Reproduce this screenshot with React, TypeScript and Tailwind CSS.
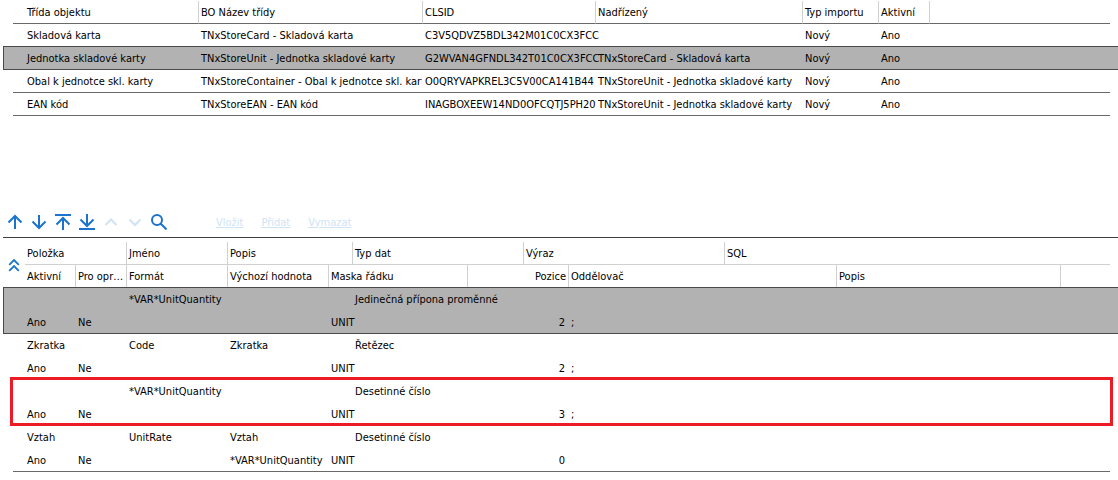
import React from "react";
import clsx from "clsx";

interface ImportClass {
  name: string;
  boClass: string;
  clsid: string;
  parent: string;
  importType: string;
  active: string;
  selected?: boolean;
}

interface ImportItem {
  item: string;
  name: string;
  label: string;
  dataType: string;
  active: string;
  forFix: string;
  defaultValue: string;
  mask: string;
  position: number;
  separator: string;
  selected?: boolean;
  marked?: boolean;
}

const classes: ImportClass[] = [
  { name: "Skladová karta", boClass: "TNxStoreCard - Skladová karta", clsid: "C3V5QDVZ5BDL342M01C0CX3FCC", parent: "", importType: "Nový", active: "Ano" },
  { name: "Jednotka skladové karty", boClass: "TNxStoreUnit - Jednotka skladové karty", clsid: "G2WVAN4GFNDL342T01C0CX3FCC", parent: "TNxStoreCard - Skladová karta", importType: "Nový", active: "Ano", selected: true },
  { name: "Obal k jednotce skl. karty", boClass: "TNxStoreContainer - Obal k jednotce skl. karty", clsid: "O0QRYVAPKREL3C5V00CA141B44", parent: "TNxStoreUnit - Jednotka skladové karty", importType: "Nový", active: "Ano" },
  { name: "EAN kód", boClass: "TNxStoreEAN - EAN kód", clsid: "INAGBOXEEW14ND0OFCQTJ5PH20", parent: "TNxStoreUnit - Jednotka skladové karty", importType: "Nový", active: "Ano" },
];

const items: ImportItem[] = [
  { item: "", name: "*VAR*UnitQuantity", label: "", dataType: "Jedinečná přípona proměnné", active: "Ano", forFix: "Ne", defaultValue: "", mask: "UNIT", position: 2, separator: ";", selected: true },
  { item: "Zkratka", name: "Code", label: "Zkratka", dataType: "Řetězec", active: "Ano", forFix: "Ne", defaultValue: "", mask: "UNIT", position: 2, separator: ";" },
  { item: "", name: "*VAR*UnitQuantity", label: "", dataType: "Desetinné číslo", active: "Ano", forFix: "Ne", defaultValue: "", mask: "UNIT", position: 3, separator: ";", marked: true },
  { item: "Vztah", name: "UnitRate", label: "Vztah", dataType: "Desetinné číslo", active: "Ano", forFix: "Ne", defaultValue: "*VAR*UnitQuantity", mask: "UNIT", position: 0, separator: "" },
];

// Toolbar icons, all drawn in a 16x16 box
const tools = [
  { label: "Nahoru", d: "M8 15V2M1.5 8.5L8 2l6.5 6.5" },
  { label: "Dolů", d: "M8 1v13M1.5 7.5L8 14l6.5-6.5" },
  { label: "Na začátek", d: "M0 1h16M8 16V4M1.5 10.5L8 4l6.5 6.5" },
  { label: "Na konec", d: "M0 15h16M8 0v12M1.5 5.5L8 12l6.5-6.5" },
  { label: "Předchozí", d: "M2.5 11L8 5.5l5.5 5.5", disabled: true },
  { label: "Další", d: "M2.5 5.5L8 11l5.5-5.5", disabled: true },
  { label: "Hledat", d: "M6 1a5 5 0 1 0 0 10a5 5 0 1 0 0-10M9.8 9.8L15.5 15.5" },
];

const ClassTable: React.FC = () => (
  <table className="w-full table-fixed border-separate border-spacing-0">
    <colgroup>
      <col className="w-[10px]" />
      <col className="w-[185px]" />
      <col className="w-[224px]" />
      <col className="w-[173px]" />
      <col className="w-[207px]" />
      <col className="w-[76px]" />
      <col className="w-[51px]" />
      <col />
      <col className="w-2" />
    </colgroup>
    <thead>
      <tr className="h-[23px]">
        <td />
        <th className="border-b border-[#696969] pl-[14px] text-left">Třída objektu</th>
        {["BO Název třídy", "CLSID", "Nadřízený", "Typ importu", "Aktivní", ""].map((title, i) => (
          <th key={i} className="border-b border-l border-b-[#696969] border-l-[#d0d0d0] pl-[2px] text-left">{title}</th>
        ))}
        <td />
      </tr>
    </thead>
    <tbody>
      {classes.map((row) => {
        const line = clsx("border-b", row.selected ? "border-[#4a4a4a]" : "border-[#696969]");
        const edge = row.selected && "border-b border-[#4a4a4a]";
        return (
          <tr key={row.name} className={clsx("h-[23px]", row.selected && "bg-[#b2b2b2] shadow-[0_-1px_0_#4a4a4a]")}>
            <td className={clsx(edge, row.selected && "border-l")} />
            <td className={clsx(line, "pl-[14px]")}>{row.name}</td>
            <td className={clsx(line, "overflow-hidden pl-[3px]")}>{row.boClass}</td>
            <td className={clsx(line, "pl-[3px]")}>{row.clsid}</td>
            <td className={clsx(line, "pl-[3px]")}>{row.parent}</td>
            <td className={clsx(line, "pl-[3px]")}>{row.importType}</td>
            <td className={clsx(line, "pl-[3px]")}>{row.active}</td>
            <td className={line} />
            <td className={clsx(edge)} />
          </tr>
        );
      })}
    </tbody>
  </table>
);

const Toolbar: React.FC = () => (
  <div className="flex h-[31px] items-center border-b border-[#404040]">
    {tools.map((tool) => (
      <button
        key={tool.label}
        type="button"
        aria-label={tool.label}
        disabled={tool.disabled}
        className={clsx("flex h-6 w-6 items-center justify-center", tool.disabled ? "text-[#cfe3f5]" : "text-[#1a73cc]")}
      >
        <svg width="16" height="16" viewBox="0 0 16 16" fill="none" stroke="currentColor" strokeWidth="2">
          <path d={tool.d} />
        </svg>
      </button>
    ))}
    <div className="ml-[45px] flex gap-[18px] pt-px text-[#cfe3f5]">
      <button type="button" disabled className="underline">Vložit</button>
      <button type="button" disabled className="underline">Přidat</button>
      <button type="button" disabled className="underline">Vymazat</button>
    </div>
  </div>
);

// Every record takes two lines, so the columns are the union of both layouts
const ItemTable: React.FC = () => {
  const top = "border-b border-l border-[#d0d0d0] pl-[2px] text-left";
  const bottom = "border-b border-l border-b-[#4a4a4a] border-l-[#d0d0d0] pl-[2px]";
  return (
    <table className="w-full table-fixed border-separate border-spacing-0">
      <colgroup>
        <col className="w-[10px]" />
        <col className="w-[12px]" />
        <col className="w-[50px]" />
        <col className="w-[51px]" />
        <col className="w-[101px]" />
        <col className="w-[101px]" />
        <col className="w-[24px]" />
        <col className="w-[115px]" />
        <col className="w-[56px]" />
        <col className="w-[45px]" />
        <col className="w-[156px]" />
        <col className="w-[112px]" />
        <col className="w-[224px]" />
        <col />
        <col className="w-2" />
      </colgroup>
      <thead>
        <tr className="h-[23px]">
          <td colSpan={2} rowSpan={2}>
            <button type="button" aria-label="Sbalit" className="ml-[5px] block text-[#1a73cc]">
              <svg width="12" height="14" viewBox="0 0 12 14" fill="none" stroke="currentColor" strokeWidth="1.8">
                <path d="M1.2 5.8L6 1l4.8 4.8M1.2 11.8L6 7l4.8 4.8" />
              </svg>
            </button>
          </td>
          <th colSpan={2} className="border-b border-[#d0d0d0] pl-[2px] text-left">Položka</th>
          <th className={top}>Jméno</th>
          <th colSpan={2} className={top}>Popis</th>
          <th colSpan={2} className={top}>Typ dat</th>
          <th colSpan={2} className={top}>Výraz</th>
          <th colSpan={3} className={top}>SQL</th>
          <td />
        </tr>
        <tr className="h-[23px]">
          <th className="border-b border-[#4a4a4a] pl-[2px] text-left">Aktivní</th>
          <th className={clsx(bottom, "text-left text-ellipsis")}>Pro opravu</th>
          <th className={clsx(bottom, "text-left")}>Formát</th>
          <th className={clsx(bottom, "text-left")}>Výchozí hodnota</th>
          <th colSpan={2} className={clsx(bottom, "text-left")}>Maska řádku</th>
          <th colSpan={2} className={clsx(bottom, "pr-[2px] text-right")}>Pozice</th>
          <th colSpan={2} className={clsx(bottom, "text-left")}>Oddělovač</th>
          <th className={clsx(bottom, "text-left")}>Popis</th>
          <th className={bottom} />
          <td />
        </tr>
      </thead>
      {items.map((row, i) => {
        const last = i === items.length - 1;
        const line = clsx(row.selected && "border-b border-[#4a4a4a]", last && "border-b border-[#696969]");
        const edge = row.selected && "border-b border-[#4a4a4a]";
        const cell = clsx(line, "pl-[3px]");
        return (
          <tbody key={i} className={clsx("relative", row.selected && "bg-[#b2b2b2]")}>
            <tr className={clsx("h-[23px]", row.selected && "shadow-[0_-1px_0_#4a4a4a]")}>
              <td className={clsx(row.selected && "border-l border-[#4a4a4a]")}>
                {row.marked && (
                  <span className="pointer-events-none absolute -top-[3px] right-[5px] bottom-0 left-[7px] border-3 border-[#ed1c24]" />
                )}
              </td>
              <td />
              <td colSpan={2} className="pl-[2px]">{row.item}</td>
              <td className="pl-[3px]">{row.name}</td>
              <td colSpan={2} className="pl-[3px]">{row.label}</td>
              <td colSpan={2} className="pl-[3px]">{row.dataType}</td>
              <td colSpan={2} />
              <td colSpan={3} />
              <td />
            </tr>
            <tr className="h-[23px]">
              <td className={clsx(edge, row.selected && "border-l")} />
              <td className={line} />
              <td className={clsx(line, "pl-[2px]")}>{row.active}</td>
              <td className={cell}>{row.forFix}</td>
              <td className={line} />
              <td className={cell}>{row.defaultValue}</td>
              <td colSpan={2} className={cell}>{row.mask}</td>
              <td colSpan={2} className={clsx(line, "pr-[3px] text-right")}>{row.position}</td>
              <td colSpan={2} className={cell}>{row.separator}</td>
              <td className={line} />
              <td className={line} />
              <td className={clsx(edge)} />
            </tr>
          </tbody>
        );
      })}
    </table>
  );
};

const App: React.FC = () => (
  <div className="min-h-screen bg-white pt-px pb-2 pl-[3px] font-['DejaVu_Sans_Condensed','DejaVu_Sans',sans-serif] text-[11px] leading-4 text-black [&_td]:pt-px [&_td]:whitespace-nowrap [&_th]:overflow-hidden [&_th]:pt-[2px] [&_th]:font-normal [&_th]:whitespace-nowrap">
    <ClassTable />
    <div className="mt-[91px]">
      <Toolbar />
      <div className="pt-1">
        <ItemTable />
      </div>
    </div>
  </div>
);

export default App;
